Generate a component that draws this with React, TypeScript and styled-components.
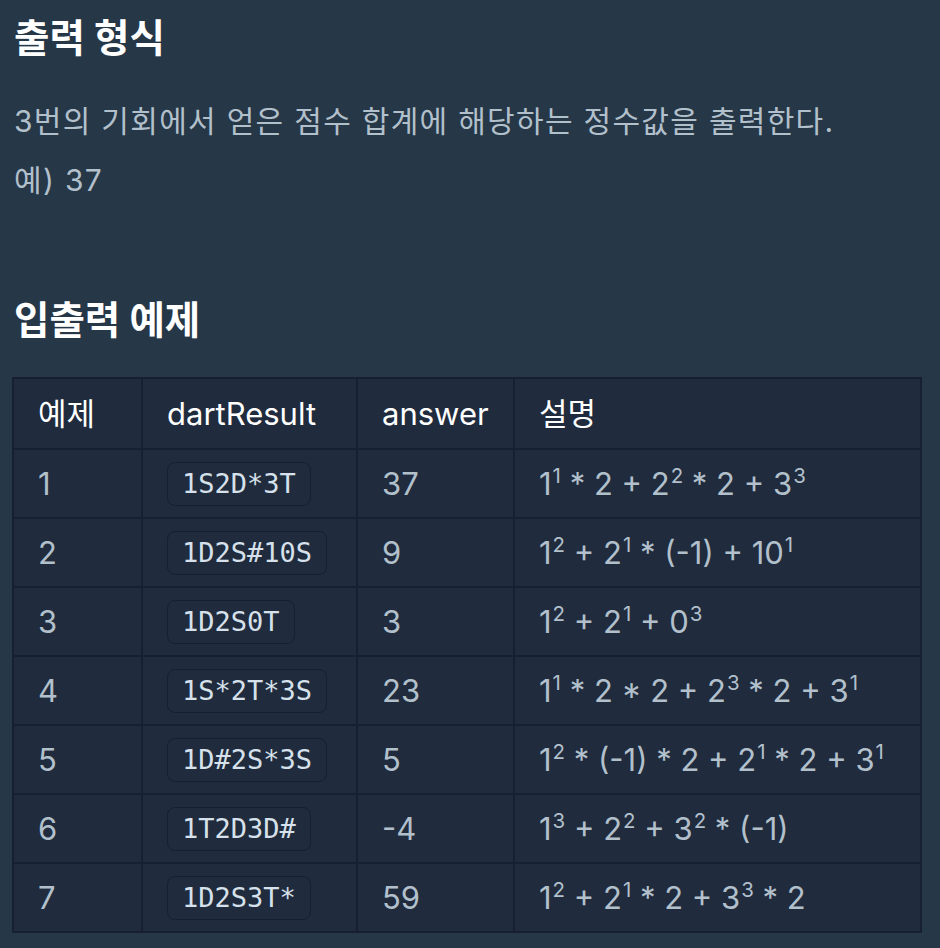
import React from "react";
import styled, { createGlobalStyle } from "styled-components";

const GlobalStyle = createGlobalStyle`
  html, body {
    margin: 0;
    padding: 0;
    background: #263747;
  }
  body {
    font-family: "Inter", "Noto Sans CJK KR", sans-serif;
    color: #b2c0cc;
  }
`;

const Page = styled.div`
  padding: 12px 20px 40px 12px;
  min-height: 948px;
  box-sizing: border-box;
`;

const Heading = styled.h3<{ $top: number }>`
  margin: ${(p) => p.$top}px 0 0 2px;
  font-size: 38.5px;
  line-height: 52px;
  font-weight: 700;
  color: #ffffff;
`;

const Paragraph = styled.p`
  margin: 28px 0 0 2px;
  font-size: 30px;
  line-height: 59px;
  letter-spacing: 1.3px;
  color: #b2c0cc;
`;

const Table = styled.table`
  margin-top: 31px;
  width: 908px;
  border-collapse: collapse;
  table-layout: fixed;
  background: #202b3d;
  border: 2px solid #172030;
  font-size: 31px;
`;

const HeadCell = styled.th<{ $w: number }>`
  box-sizing: border-box;
  width: ${(p) => p.$w}px;
  height: 71px;
  padding: 0 24px;
  line-height: 40px;
  text-align: left;
  font-weight: 400;
  color: #ffffff;
  border: 2px solid #172030;
`;

const Cell = styled.td`
  box-sizing: border-box;
  height: 69px;
  padding: 0 24px;
  line-height: 40px;
  color: #b2c0cc;
  border: 2px solid #172030;
  white-space: nowrap;
`;

const Code = styled.code`
  display: inline-block;
  padding: 4px 14px;
  line-height: 34px;
  font-family: "DejaVu Sans Mono", "Liberation Mono", monospace;
  font-size: 27px;
  color: #d6e1eb;
  background: #202b3d;
  border: 1px solid #172030;
  border-radius: 8px;
  vertical-align: middle;
`;

const Sup = styled.sup`
  font-size: 0.66em;
  line-height: 0;
  vertical-align: 12px;
  margin-left: 1px;
`;

type Term = [string, string] | string;

const rows: { id: string; dart: string; answer: string; expl: Term[] }[] = [
  { id: "1", dart: "1S2D*3T", answer: "37", expl: [["1", "1"], " * 2 + ", ["2", "2"], " * 2 + ", ["3", "3"]] },
  { id: "2", dart: "1D2S#10S", answer: "9", expl: [["1", "2"], " + ", ["2", "1"], " * (-1) + ", ["10", "1"]] },
  { id: "3", dart: "1D2S0T", answer: "3", expl: [["1", "2"], " + ", ["2", "1"], " + ", ["0", "3"]] },
  { id: "4", dart: "1S*2T*3S", answer: "23", expl: [["1", "1"], " * 2 * 2 + ", ["2", "3"], " * 2 + ", ["3", "1"]] },
  { id: "5", dart: "1D#2S*3S", answer: "5", expl: [["1", "2"], " * (-1) * 2 + ", ["2", "1"], " * 2 + ", ["3", "1"]] },
  { id: "6", dart: "1T2D3D#", answer: "-4", expl: [["1", "3"], " + ", ["2", "2"], " + ", ["3", "2"], " * (-1)"] },
  { id: "7", dart: "1D2S3T*", answer: "59", expl: [["1", "2"], " + ", ["2", "1"], " * 2 + ", ["3", "3"], " * 2"] },
];

const Explain = ({ terms }: { terms: Term[] }) => (
  <>
    {terms.map((t, i) =>
      typeof t === "string" ? (
        <React.Fragment key={i}>{t}</React.Fragment>
      ) : (
        <React.Fragment key={i}>
          {t[0]}
          <Sup>{t[1]}</Sup>
        </React.Fragment>
      )
    )}
  </>
);

const App = () => {
  return (
    <>
      <GlobalStyle />
      <Page>
        <Heading $top={0}>출력 형식</Heading>
        <Paragraph>
          3번의 기회에서 얻은 점수 합계에 해당하는 정수값을 출력한다.
          <br />
          예) 37
        </Paragraph>
        <Heading $top={84}>입출력 예제</Heading>
        <Table>
          <thead>
            <tr>
              <HeadCell $w={129}>예제</HeadCell>
              <HeadCell $w={215}>dartResult</HeadCell>
              <HeadCell $w={157}>answer</HeadCell>
              <HeadCell $w={407}>설명</HeadCell>
            </tr>
          </thead>
          <tbody>
            {rows.map((r) => (
              <tr key={r.id}>
                <Cell>{r.id}</Cell>
                <Cell>
                  <Code>{r.dart}</Code>
                </Cell>
                <Cell>{r.answer}</Cell>
                <Cell>
                  <Explain terms={r.expl} />
                </Cell>
              </tr>
            ))}
          </tbody>
        </Table>
      </Page>
    </>
  );
};

export default App;
